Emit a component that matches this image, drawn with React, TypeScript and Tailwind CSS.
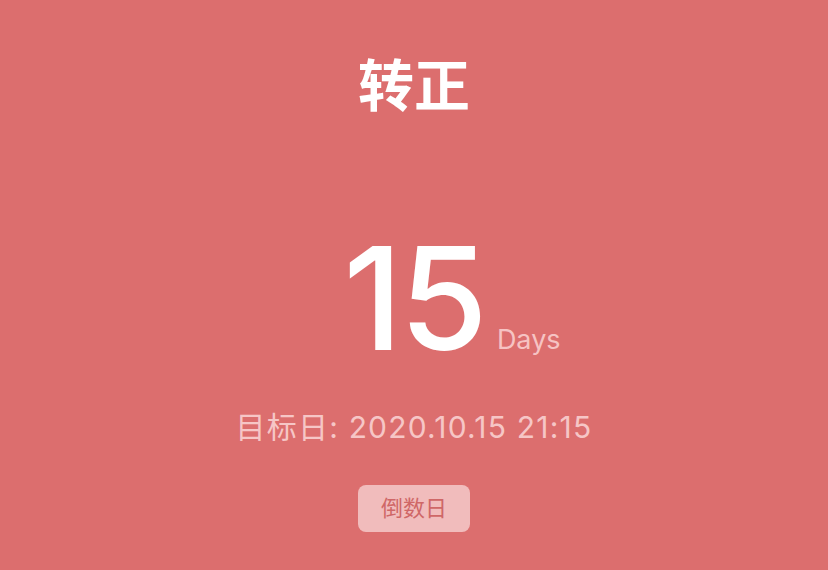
export default function App() {
  return (
    <div
      className="flex h-[570px] w-full flex-col items-center overflow-hidden bg-[#dc6e6e] pt-[44px]"
      style={{ fontFamily: 'Inter, "Noto Sans CJK SC", sans-serif' }}
    >
      <h1 className="text-[56px] font-semibold leading-[84px] text-white">转正</h1>

      <div className="relative mt-[97px] flex items-end">
        <span className="text-[143px] font-medium leading-[146px] tracking-[-3px] text-white">
          15
        </span>
        <span className="absolute bottom-[16px] left-full ml-[12px] text-[27px] leading-[30px] text-[#f6c3c3]">
          Days
        </span>
      </div>

      <p className="mt-[36px] text-[30px] leading-[40px] tracking-[1.2px] text-[#f6c6c6]">
        目标日: 2020.10.15 21:15
      </p>

      <button
        type="button"
        className="mt-[38px] h-[47px] w-[112px] rounded-[8px] bg-[#f1bcbc] text-[22px] text-[#cf6767]"
      >
        倒数日
      </button>
    </div>
  );
}
